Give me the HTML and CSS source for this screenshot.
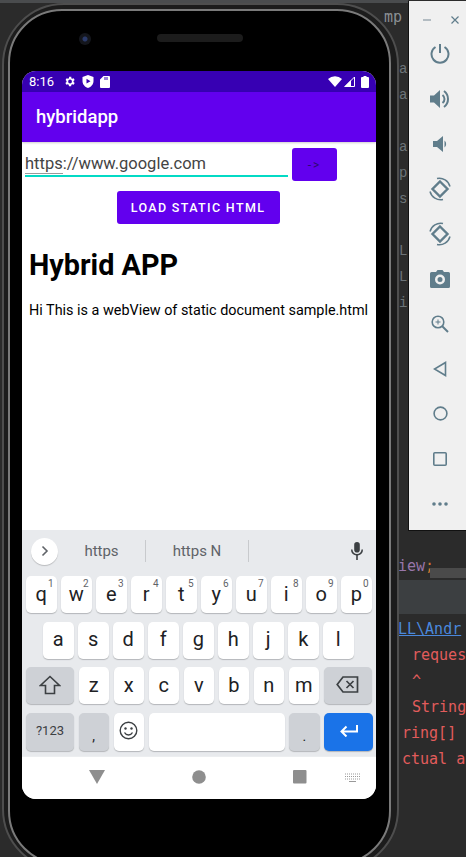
FILE: index.html
```html
<!DOCTYPE html>
<html lang="en">
<head>
  <meta charset="UTF-8">
  <meta name="viewport" content="width=device-width, initial-scale=1.0">
  <title>hybridapp</title>
  <link rel="stylesheet" href="styles.css">
</head>
<body>
  <!-- IDE behind the emulator -->
  <div class="ide-top"><span class="frag-a">mp</span></div>
  <div class="ide-frags">
    <span>a</span><span>a</span><span></span><span>a</span><span>p</span><span>s</span><span></span><span>L</span><span>L</span><span>i</span>
  </div>
  <div class="ide-code">
    <div class="code-line"><span class="code-view">iew</span><span class="code-semi">;</span></div>
    <div class="code-band"></div>
    <div class="code-out">
      <div class="code-link">LL\Andr</div>
      <div class="code-err code-in">reques</div>
      <div class="code-err code-in">^</div>
      <div class="code-err code-in">String</div>
      <div class="code-err code-cut">ring[]</div>
      <div class="code-err code-cut">ctual a</div>
    </div>
  </div>

  <!-- Phone -->
  <div class="phone">
    <div class="bezel">
      <div class="camera"></div>
      <div class="speaker"></div>
      <div class="screen">
        <div class="status-bar">
          <span class="clock">8:16</span>
          <svg class="st-icon" width="13" height="13" viewBox="0 0 24 24"><path fill="#fff" d="M19.4 13a7.5 7.5 0 0 0 0-2l2.100-1.600-2-3.500-2.500 1a7.5 7.500 0 0 0-1.700-1L15.400 3.300h-4l-.4 2.600a7.500 7.500 0 0 0-1.700 1l-2.500-1-2 3.500L6.500 11a7.500 7.500 0 0 0 0 2l-2.100 1.600 2 3.500 2.500-1a7.500 7.500 0 0 0 1.700 1l.4 2.600h4l.4-2.600a7.500 7.500 0 0 0 1.700-1l2.500 1 2-3.500zM13 15.500a3.500 3.500 0 1 1 0-7 3.500 3.500 0 0 1 0 7z"/></svg>
          <svg class="st-icon" width="12" height="13" viewBox="0 0 12 13"><path fill="#fff" fill-rule="evenodd" d="M6 0l5.500 2v4c0 3.300-2.300 6-5.500 7C2.800 12 .5 9.300.5 6V2zM4.500 3.800v4.800L8.500 6.200z"/></svg>
          <svg class="st-icon" width="10" height="12" viewBox="0 0 10 12"><path fill="#fff" fill-rule="evenodd" d="M3.500 0H9a1 1 0 0 1 1 1v10a1 1 0 0 1-1 1H1a1 1 0 0 1-1-1V3.500zM4.500 1v3h1V1zM6.500 1v3h1V1z"/></svg>
          <span class="st-spacer"></span>
          <svg width="14" height="11" viewBox="0 0 14 11"><path fill="#fff" d="M0 3a10.500 10.500 0 0 1 14 0L7 11z"/></svg>
          <svg class="st-signal" width="11" height="11" viewBox="0 0 11 11"><path fill="none" stroke="#fff" d="M10.500 1v9.500H1z"/><path fill="#fff" d="M0 11L7 4v7z"/></svg>
          <svg class="st-batt" width="8" height="12" viewBox="0 0 8 12"><path fill="#fff" d="M2.500 0h3v1H7a1 1 0 0 1 1 1v9a1 1 0 0 1-1 1H1a1 1 0 0 1-1-1V2a1 1 0 0 1 1-1h1.500z"/></svg>
        </div>
        <div class="app-bar">hybridapp</div>
        <div class="content">
          <div class="url-row">
            <div class="url-input"><span class="composing">https</span>://www.google.com</div>
            <button class="go-btn">-&gt;</button>
          </div>
          <button class="load-btn">LOAD STATIC HTML</button>
          <div class="webview">
            <h1>Hybrid APP</h1>
            <p>Hi This is a webView of static document sample.html</p>
          </div>
        </div>
        <div class="keyboard">
          <div class="suggest">
            <div class="sg-toggle">
              <svg width="8" height="12" viewBox="0 0 8 12"><path fill="none" stroke="#5f6368" stroke-width="1.600" d="M1.500 1.500L6 6l-4.500 4.500"/></svg>
            </div>
            <div class="sg-item sg-first">https</div>
            <div class="sg-item sg-second">https N</div>
            <svg class="sg-mic" width="14" height="18" viewBox="0 0 14 18"><path fill="#3c4043" d="M7 0a2.800 2.800 0 0 1 2.800 2.800v5a2.800 2.800 0 0 1-5.600 0v-5A2.800 2.800 0 0 1 7 0z"/><path fill="#3c4043" d="M1 7.500h1.500a4.500 4.500 0 0 0 9 0H13a6 6 0 0 1-5.200 5.900V18H6.200v-4.600A6 6 0 0 1 1 7.500z"/></svg>
          </div>
          <div class="key-row">
            <div class="key"><sup>1</sup>q</div>
            <div class="key"><sup>2</sup>w</div>
            <div class="key"><sup>3</sup>e</div>
            <div class="key"><sup>4</sup>r</div>
            <div class="key"><sup>5</sup>t</div>
            <div class="key"><sup>6</sup>y</div>
            <div class="key"><sup>7</sup>u</div>
            <div class="key"><sup>8</sup>i</div>
            <div class="key"><sup>9</sup>o</div>
            <div class="key"><sup>0</sup>p</div>
          </div>
          <div class="key-row row-mid">
            <div class="key">a</div>
            <div class="key">s</div>
            <div class="key">d</div>
            <div class="key">f</div>
            <div class="key">g</div>
            <div class="key">h</div>
            <div class="key">j</div>
            <div class="key">k</div>
            <div class="key">l</div>
          </div>
          <div class="key-row">
            <div class="key key-fn key-wide">
              <svg width="22" height="20" viewBox="0 0 22 20"><path fill="none" stroke="#3c4043" stroke-width="1.600" d="M11 1.500L1.500 10.500H6.500V18.500H15.500V10.500H20.500z"/></svg>
            </div>
            <div class="key">z</div>
            <div class="key">x</div>
            <div class="key">c</div>
            <div class="key">v</div>
            <div class="key">b</div>
            <div class="key">n</div>
            <div class="key">m</div>
            <div class="key key-fn key-wide">
              <svg width="23" height="17" viewBox="0 0 23 17"><path fill="none" stroke="#3c4043" stroke-width="1.700" d="M7 1H21.500V16H7L1.200 8.500z"/><path fill="none" stroke="#3c4043" stroke-width="1.700" d="M10.500 5l7 7M17.500 5l-7 7"/></svg>
            </div>
          </div>
          <div class="key-row row-last">
            <div class="key key-fn key-wide key-sym">?123</div>
            <div class="key key-fn key-punct">,</div>
            <div class="key">
              <svg width="19" height="19" viewBox="0 0 19 19"><circle cx="9.500" cy="9.500" r="8.300" fill="none" stroke="#3c4043" stroke-width="1.400"/><circle cx="6.500" cy="7.500" r="1.200" fill="#3c4043"/><circle cx="12.500" cy="7.500" r="1.200" fill="#3c4043"/><path fill="none" stroke="#3c4043" stroke-width="1.400" d="M5.500 11.500a4.500 4.500 0 0 0 8 0"/></svg>
            </div>
            <div class="key key-space"></div>
            <div class="key key-fn key-punct">.</div>
            <div class="key key-enter key-wide">
              <svg width="18" height="12" viewBox="0 0 18 12"><path fill="none" stroke="#fff" stroke-width="2" d="M17 0v6.500H2M6.500 1.500L1.500 6.500l5 5"/></svg>
            </div>
          </div>
        </div>
        <div class="nav-bar">
          <svg width="16" height="14" viewBox="0 0 16 14"><path fill="#8e8e8e" d="M0 0h16L8 14z"/></svg>
          <svg width="14" height="14" viewBox="0 0 14 14"><circle cx="7" cy="7" r="6.800" fill="#8e8e8e"/></svg>
          <svg width="14" height="14" viewBox="0 0 14 14"><rect width="13.500" height="13.500" rx="1" fill="#8e8e8e"/></svg>
          <svg class="nav-kbd" width="15" height="9" viewBox="0 0 15 9"><path stroke="#999" stroke-dasharray="1 1" d="M0 1h15M0 3.500h15M0 6h15"/><path stroke="#999" d="M4 8.500h7"/></svg>
        </div>
      </div>
    </div>
  </div>

  <!-- Emulator toolbar -->
  <div class="toolbar">
    <div class="win-ctrl">
      <svg width="8" height="8" viewBox="0 0 8 8"><path stroke="#8a9aa3" stroke-width="1.200" d="M0 4h8"/></svg>
      <svg width="8" height="8" viewBox="0 0 8 8"><path stroke="#607d8b" stroke-width="1.200" d="M.5.500l7 7M7.500.500l-7 7"/></svg>
    </div>
    <svg width="20" height="20" viewBox="0 0 20 20"><path fill="none" stroke="#607d8b" stroke-width="2" d="M10 0v9M5.500 3a8.500 8.500 0 1 0 9 0"/></svg>
    <svg width="20" height="20" viewBox="0 0 20 20"><path fill="#607d8b" d="M0 6.500h4L10 1v18l-6-5.500H0z"/><path fill="none" stroke="#607d8b" stroke-width="2" d="M12.500 6a5 5 0 0 1 0 8M14 2a10 10 0 0 1 0 16"/></svg>
    <svg width="16" height="16" viewBox="0 0 16 16"><path fill="#607d8b" d="M1 5h4l6-5v16l-6-5H1zM12.500 4.500a4.500 4.500 0 0 1 0 7z"/></svg>
    <svg width="24" height="24" viewBox="0 0 24 24"><path fill="none" stroke="#607d8b" stroke-width="2.400" d="M12 4.500L19.500 12 12 19.500 4.500 12z"/><path fill="none" stroke="#607d8b" stroke-width="1.500" d="M9 1.500a11 11 0 0 1 13 8M15 22.500a11 11 0 0 1-13-8"/></svg>
    <svg width="24" height="24" viewBox="0 0 24 24"><path fill="none" stroke="#607d8b" stroke-width="2.400" d="M12 4.500L19.500 12 12 19.500 4.500 12z"/><path fill="none" stroke="#607d8b" stroke-width="1.500" d="M15 1.500a11 11 0 0 0-13 8M9 22.500a11 11 0 0 0 13-8"/></svg>
    <svg width="20" height="18" viewBox="0 0 20 18"><path fill="#607d8b" fill-rule="evenodd" d="M6 2l1.500-2h5L14 2h4.500A1.500 1.500 0 0 1 20 3.500v13a1.500 1.500 0 0 1-1.500 1.500h-17A1.500 1.500 0 0 1 0 16.500v-13A1.500 1.500 0 0 1 1.500 2zM10 14.500a5 5 0 1 0 0-10 5 5 0 0 0 0 10zM10 12a2.500 2.500 0 1 1 0-5 2.500 2.500 0 0 1 0 5z"/></svg>
    <svg width="18" height="18" viewBox="0 0 18 18"><circle cx="7" cy="7" r="5.800" fill="none" stroke="#607d8b" stroke-width="1.600"/><path stroke="#607d8b" stroke-width="2" d="M11 11l6 6"/><path stroke="#607d8b" d="M7 4.500v5M4.500 7h5"/></svg>
    <svg width="14" height="16" viewBox="0 0 14 16"><path fill="none" stroke="#607d8b" stroke-width="1.600" d="M12.500 1.500v13L1.500 8z"/></svg>
    <svg width="15" height="15" viewBox="0 0 15 15"><circle cx="7.500" cy="7.500" r="6.400" fill="none" stroke="#607d8b" stroke-width="1.600"/></svg>
    <svg width="14" height="14" viewBox="0 0 14 14"><rect x=".8" y=".8" width="12.400" height="12.400" rx="1" fill="none" stroke="#607d8b" stroke-width="1.600"/></svg>
    <svg width="16" height="4" viewBox="0 0 16 4"><circle cx="2" cy="2" r="1.800" fill="#607d8b"/><circle cx="8" cy="2" r="1.800" fill="#607d8b"/><circle cx="14" cy="2" r="1.800" fill="#607d8b"/></svg>
  </div>
</body>
</html>
```

FILE: styles.css
```css
/* General Styles */
* {
  box-sizing: border-box;
}

body {
  margin: 0;
  width: 466px;
  height: 857px;
  position: relative;
  overflow: hidden;
  background-color: #2b2b2b;
  font-family: 'Roboto', sans-serif;
}

/* IDE bits around the emulator */
.ide-top {
  position: absolute;
  top: 0;
  left: 0;
  width: 408px;
  height: 3px;
  background-color: #4a4c4e;
}

.frag-a {
  position: absolute;
  top: 8px;
  left: 384px;
  font: 15px 'DejaVu Sans Mono', monospace;
  color: #8a8f93;
}

.ide-frags {
  position: absolute;
  top: 56px;
  left: 399px;
  display: flex;
  flex-direction: column;
  font: 14px/26px 'Liberation Mono', monospace;
  color: #6d7478;
}

.ide-frags span {
  height: 26px;
}

.ide-code {
  position: absolute;
  top: 530px;
  left: 398px;
  width: 68px;
  height: 327px;
  font: 15px/26px 'DejaVu Sans Mono', monospace;
  white-space: nowrap;
}

.code-line {
  height: 38px;
  padding-top: 27px;
  line-height: 18px;
  position: relative;
}

.code-line::after {
  content: "";
  position: absolute;
  top: 38px;
  left: 32px;
  right: 0;
  height: 10px;
  background-color: #4a4a4a;
}

.code-view {
  color: #9876aa;
}

.code-semi {
  color: #cc7832;
}

.code-band {
  height: 46px;
  border-top: 12px solid #2b2b2b;
  background-color: #3c3f41;
}

.code-out {
  padding-top: 2px;
}

.code-link {
  color: #4a88dc;
  text-decoration: underline;
}

.code-err {
  color: #e25c5c;
}

.code-in {
  padding-left: 14px;
}

.code-cut {
  padding-left: 4px;
}

/* Phone */
.phone {
  position: absolute;
  top: 3px;
  left: 2px;
  width: 397px;
  height: 868px;
  padding: 4px 6px 4px 4px;
  border: 2px solid #4e4e4e;
  border-radius: 62px;
  background-color: #1c1c1c;
}

.bezel {
  position: relative;
  height: 100%;
  padding: 60px 12px 0 12px;
  border: 2px solid #7a7a7a;
  border-radius: 54px;
  background-color: #000;
}

.camera {
  position: absolute;
  top: 22px;
  left: 69px;
  width: 12px;
  height: 12px;
  border-radius: 50%;
  background: radial-gradient(circle, #2a3a6a 0 2px, #14161c 3px);
}

.speaker {
  position: absolute;
  top: 23px;
  left: 147px;
  width: 86px;
  height: 8px;
  border-radius: 4px;
  background-color: #1c1c1c;
}

/* Screen */
.screen {
  width: 354px;
  height: 728px;
  display: flex;
  flex-direction: column;
  overflow: hidden;
  border-radius: 14px;
  background-color: #fff;
}

.status-bar {
  height: 21px;
  flex: none;
  display: flex;
  align-items: center;
  padding: 0 7px;
  background-color: #3700b3;
  color: #fff;
}

.clock {
  font-size: 13px;
  margin-right: 9px;
}

.st-icon {
  margin-right: 6px;
}

.st-spacer {
  flex: 1;
}

.st-signal {
  margin-left: 2px;
}

.st-batt {
  margin-left: 6px;
}

.app-bar {
  height: 50px;
  flex: none;
  display: flex;
  align-items: center;
  padding-left: 14px;
  background-color: #6200ee;
  color: #fff;
  font-size: 18.5px;
  font-weight: 500;
  box-shadow: 0 1px 2px rgba(0, 0, 0, 0.2);
}

/* Content */
.content {
  flex: 1;
  min-height: 0;
  display: flex;
  flex-direction: column;
  align-items: center;
}

.url-row {
  width: 100%;
  display: flex;
  padding: 6px 0 0 3px;
  align-items: flex-start;
}

.url-input {
  width: 263px;
  height: 29px;
  padding-top: 8px;
  border-bottom: 2px solid #03dac5;
  font-size: 16.5px;
  line-height: 15px;
  color: #444;
}

.composing {
  border-bottom: 1px solid #999;
}

.go-btn {
  width: 45px;
  height: 33px;
  margin-left: 4px;
  border: none;
  border-radius: 3px;
  background-color: #6200ee;
  color: #2d0a70;
  font-family: 'Roboto', sans-serif;
  font-size: 12px;
  letter-spacing: 2px;
  padding: 0;
}

.load-btn {
  width: 163px;
  height: 33px;
  margin-top: 10px;
  margin-right: 2px;
  border: none;
  border-radius: 3px;
  background-color: #6200ee;
  color: #fff;
  font-family: 'Roboto', sans-serif;
  font-size: 12.5px;
  font-weight: 500;
  letter-spacing: 1.35px;
  padding: 0;
}

.webview {
  width: 100%;
  padding-left: 7px;
  color: #000;
}

.webview h1 {
  margin: 24px 0 0;
  font-size: 28.8px;
  line-height: 34px;
  font-weight: 700;
}

.webview p {
  margin: 19px 0 0;
  font-size: 14.4px;
  line-height: 20px;
  white-space: nowrap;
}

/* Keyboard */
.keyboard {
  height: 226px;
  flex: none;
  background-color: #e8eaed;
  padding: 0 4px;
}

.suggest {
  height: 46px;
  display: flex;
  align-items: center;
  position: relative;
  padding-bottom: 4px;
}

.sg-toggle {
  width: 27px;
  height: 27px;
  margin-left: 5px;
  display: flex;
  align-items: center;
  justify-content: center;
  border-radius: 50%;
  background-color: #fff;
  box-shadow: 0 1px 1px rgba(0, 0, 0, 0.2);
}

.sg-item {
  height: 22px;
  display: flex;
  align-items: center;
  justify-content: center;
  font-size: 15px;
  color: #5f6368;
  border-right: 1px solid #c8cacd;
}

.sg-first {
  width: 88px;
}

.sg-second {
  width: 103px;
}

.sg-mic {
  position: absolute;
  right: 8px;
  top: 12px;
}

.key-row {
  height: 37px;
  margin-bottom: 8.5px;
  display: flex;
  gap: 4.5px;
}

.row-mid {
  padding-left: 17px;
}

.row-last {
  height: 38px;
  margin-bottom: 0;
}

.key {
  position: relative;
  width: 30.5px;
  flex: none;
  display: flex;
  align-items: center;
  justify-content: center;
  padding-bottom: 2px;
  border-radius: 5px;
  background-color: #fff;
  box-shadow: 0 1px 1px rgba(60, 64, 67, 0.3);
  font-size: 20px;
  color: #202124;
}

.key sup {
  position: absolute;
  top: 2px;
  right: 3px;
  font-size: 10px;
  line-height: 12px;
  color: #5f6368;
}

.key-fn {
  background-color: #ced1d6;
}

.key-wide {
  width: 48px;
}

.key-sym {
  font-size: 13px;
  color: #3c4043;
}

.key-punct {
  font-size: 14px;
  padding-top: 10px;
}

.key-space {
  width: 136px;
}

.key-enter {
  width: 49px;
  background-color: #1a73e8;
}

.nav-bar {
  height: 43px;
  flex: none;
  display: flex;
  align-items: center;
  position: relative;
  padding-bottom: 2px;
  padding-left: 67px;
  gap: 87px;
  background-color: #fff;
  border-top: 1px solid #eceef0;
}

.nav-kbd {
  position: absolute;
  right: 16px;
  top: 16px;
}

/* Emulator toolbar */
.toolbar {
  position: absolute;
  top: 1px;
  left: 408px;
  width: 58px;
  height: 530px;
  display: grid;
  grid-template-rows: 30px repeat(11, 45px);
  align-items: center;
  justify-items: center;
  padding-left: 5px;
  background-color: #f0f0f0;
  border-bottom: 1px solid #111;
  border-left: 1px solid #111;
}

.win-ctrl {
  width: 100%;
  display: flex;
  justify-content: space-between;
  padding: 8px 7px 0 9px;
}
```
